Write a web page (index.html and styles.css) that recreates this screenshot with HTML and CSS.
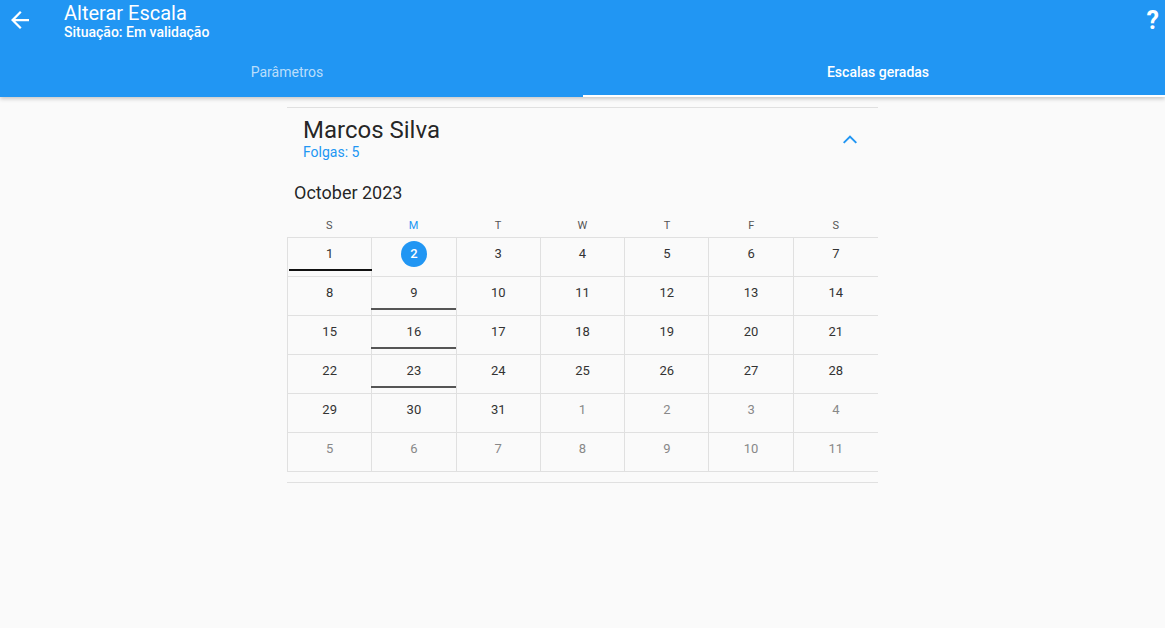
FILE: index.html
```html
<!DOCTYPE html>
<html lang="pt">
<head>
<meta charset="utf-8">
<link rel="stylesheet" href="styles.css">
</head>
<body>
<header class="appbar">
  <div class="toolbar">
    <button class="icon-btn back" aria-label="Voltar">
      <svg width="18" height="18" viewBox="0 0 16 16"><path d="M16 7H3.83l5.59-5.59L8 0 0 8l8 8 1.41-1.41L3.830 9H16z" fill="#fff"/></svg>
    </button>
    <div class="titles">
      <div class="title">Alterar Escala</div>
      <div class="subtitle">Situação: Em validação</div>
    </div>
    <div class="help">?</div>
  </div>
  <nav class="tabs">
    <div class="tab first">Parâmetros</div>
    <div class="tab active">Escalas geradas</div>
  </nav>
</header>
<main class="content">
  <section class="panel">
    <div class="panel-head">
      <div>
        <div class="name">Marcos Silva</div>
        <div class="folgas">Folgas: 5</div>
      </div>
      <svg class="chevron" width="14" height="9" viewBox="0 0 14 9"><path d="M1.4 8.6 7 3l5.6 5.6L14 7.2 7 .2 0 7.2z" fill="#2196F3"/></svg>
    </div>
    <div class="month">October 2023</div>
    <div class="weekdays">
      <div>S</div><div class="cur">M</div><div>T</div><div>W</div><div>T</div><div>F</div><div>S</div>
    </div>
    <div class="grid">
      <div class="cell mark-black">1</div>
      <div class="cell"><span class="today">2</span></div>
      <div class="cell">3</div>
      <div class="cell">4</div>
      <div class="cell">5</div>
      <div class="cell">6</div>
      <div class="cell">7</div>
      <div class="cell">8</div>
      <div class="cell mark">9</div>
      <div class="cell">10</div>
      <div class="cell">11</div>
      <div class="cell">12</div>
      <div class="cell">13</div>
      <div class="cell">14</div>
      <div class="cell">15</div>
      <div class="cell mark">16</div>
      <div class="cell">17</div>
      <div class="cell">18</div>
      <div class="cell">19</div>
      <div class="cell">20</div>
      <div class="cell">21</div>
      <div class="cell">22</div>
      <div class="cell mark">23</div>
      <div class="cell">24</div>
      <div class="cell">25</div>
      <div class="cell">26</div>
      <div class="cell">27</div>
      <div class="cell">28</div>
      <div class="cell">29</div>
      <div class="cell">30</div>
      <div class="cell">31</div>
      <div class="cell out">1</div>
      <div class="cell out">2</div>
      <div class="cell out">3</div>
      <div class="cell out">4</div>
      <div class="cell out">5</div>
      <div class="cell out">6</div>
      <div class="cell out">7</div>
      <div class="cell out">8</div>
      <div class="cell out">9</div>
      <div class="cell out">10</div>
      <div class="cell out">11</div>
    </div>
  </section>
</main>
</body>
</html>
```

FILE: styles.css
```css
* { box-sizing: border-box; }
html, body { margin: 0; padding: 0; }
body {
  background: #fafafa;
  font-family: Roboto, "Liberation Sans", sans-serif;
  color: rgba(0,0,0,0.87);
  width: 1165px;
  height: 628px;
  overflow: hidden;
}
.appbar {
  background: #2196F3;
  color: #fff;
  height: 97px;
  display: flex;
  flex-direction: column;
  box-shadow: 0 2px 4px rgba(0,0,0,0.2);
  position: relative;
  z-index: 1;
}
.toolbar {
  height: 48px;
  display: flex;
  align-items: flex-start;
}
.icon-btn {
  background: none;
  border: 0;
  padding: 0;
  margin: 11px 0 0 11px;
  width: 18px;
  height: 18px;
  display: flex;
}
.titles {
  margin-left: 35px;
  padding-top: 2px;
}
.title {
  font-size: 20px;
  line-height: 22px;
  font-weight: 400;
}
.subtitle {
  font-size: 14px;
  line-height: 16px;
  font-weight: 500;
}
.help {
  margin-left: auto;
  margin-right: 6px;
  margin-top: 5px;
  font-size: 25px;
  font-weight: 700;
  line-height: 32px;
}
.tabs {
  display: flex;
  height: 49px;
}
.tab {
  flex: 1;
  display: flex;
  align-items: center;
  justify-content: center;
  font-size: 14px;
  color: rgba(255,255,255,0.7);
  padding-top: 1px;
  padding-left: 8px;
  border-bottom: 2px solid transparent;
}
.tab.first {
  padding-left: 0;
  padding-right: 9px;
}
.tab.active {
  color: #fff;
  font-weight: 500;
  border-bottom-color: #fff;
}
.content {
  padding-top: 10px;
  display: flex;
  justify-content: center;
}
.panel {
  width: 591px;
  border-top: 1px solid #e0e0e0;
  border-bottom: 1px solid #e0e0e0;
  padding-bottom: 10px;
}
.panel-head {
  display: flex;
  align-items: center;
  justify-content: space-between;
  padding: 8px 21px 0 16px;
}
.name {
  font-size: 24px;
  line-height: 28px;
}
.folgas {
  font-size: 14px;
  line-height: 16px;
  color: #2196F3;
}
.chevron { margin-top: 2px; }
.month {
  margin-top: 21px;
  padding-left: 7px;
  font-size: 18px;
  line-height: 24px;
}
.weekdays {
  margin-top: 10px;
  display: grid;
  grid-template-columns: repeat(7, 1fr);
  height: 22px;
  font-size: 11px;
  line-height: 18px;
  padding-top: 2px;
  color: #555;
  text-align: center;
}
.weekdays .cur { color: #2196F3; }
.grid {
  display: grid;
  grid-template-columns: repeat(7, 1fr);
  border-top: 1px solid #e0e0e0;
  border-left: 1px solid #e0e0e0;
}
.cell {
  height: 39px;
  border-bottom: 1px solid #e0e0e0;
  border-right: 1px solid #e0e0e0;
  display: flex;
  justify-content: center;
  align-items: flex-start;
  padding-top: 8px;
  font-size: 13px;
  line-height: 16px;
  color: #333;
  position: relative;
}
.cell:nth-child(7n) { border-right: 0; }
.cell.out { color: #888; }
.today {
  width: 26px;
  height: 26px;
  border-radius: 50%;
  background: #2196F3;
  color: #fff;
  font-weight: 500;
  display: flex;
  align-items: center;
  justify-content: center;
  margin-top: -5px;
}
.mark::after, .mark-black::after {
  content: "";
  position: absolute;
  left: -1px;
  right: 0;
  bottom: 5px;
  height: 2px;
  background: #555;
}
.mark-black::after { background: #111; left: 1px; right: -1px; }
```
